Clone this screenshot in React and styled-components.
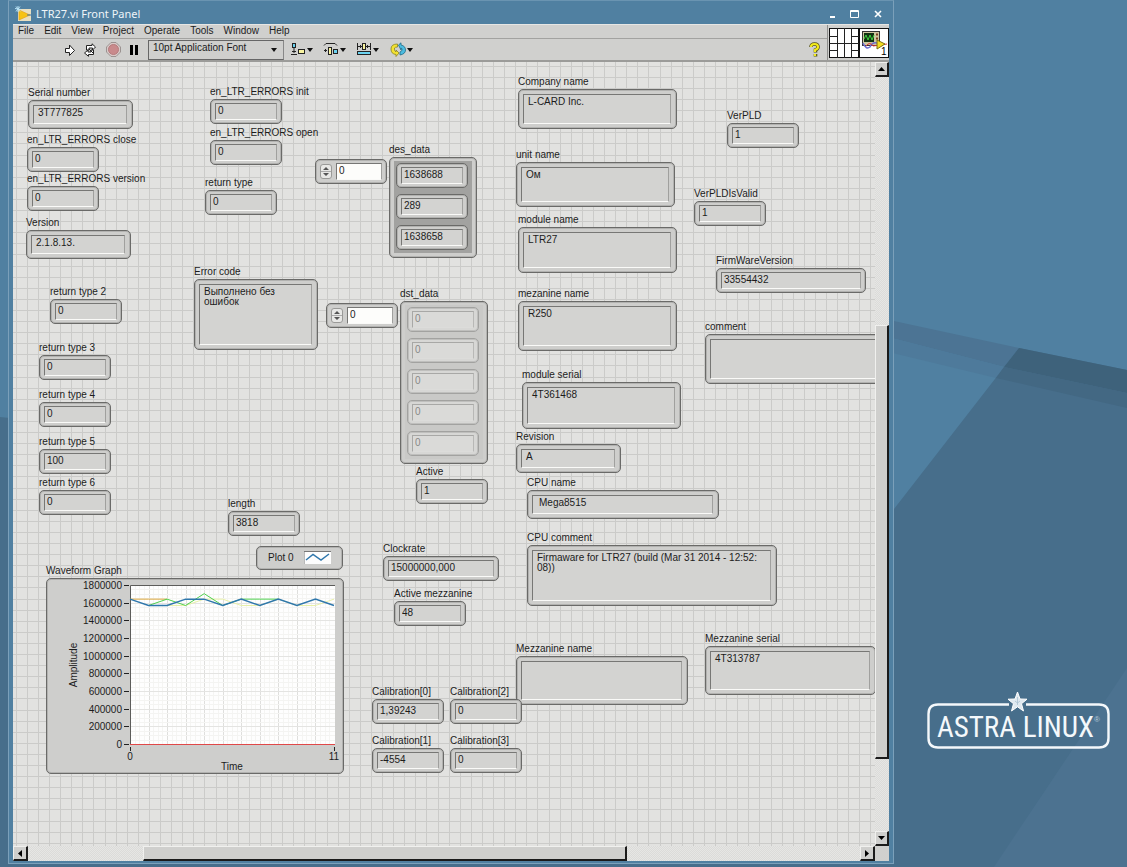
import React from "react";
import styled, { createGlobalStyle, css } from "styled-components";

const GlobalStyle = createGlobalStyle`
  * {
    box-sizing: border-box;
  }
  body {
    margin: 0;
    background: #5080a1;
    font-family: "Liberation Sans", Arial, sans-serif;
    font-size: 10px;
    line-height: 13px;
    color: #1c1c1c;
  }
  button,
  input,
  select,
  textarea {
    font: inherit;
    color: inherit;
    margin: 0;
    border-radius: 0;
    outline: none;
  }
`;

const Desktop = styled.div`
  position: relative;
  display: flex;
  height: 100vh;
  min-height: 600px;
  overflow: hidden;
  padding: 0 0 3px 8px;
`;

const Wallpaper = styled.svg`
  position: absolute;
  inset: 0;
  width: 100%;
  height: 100%;
`;

const Brand = styled.div`
  position: relative;
  flex: 0 0 233px;
  display: flex;
  align-items: flex-end;
  justify-content: center;
  padding: 0 0 113px 14px;
`;

const Window = styled.main`
  position: relative;
  flex: 1;
  min-width: 0;
  display: flex;
  flex-direction: column;
  background: #5080a1;
  border: 1px solid #7ba0ba;
  border-top-color: #6a94b1;
  padding: 0 4px 2px 4px;
`;

const TitleBar = styled.header`
  flex: 0 0 23px;
  display: flex;
  align-items: center;
  gap: 5px;
  padding: 2px 5px 0 2px;
  h1 {
    flex: 1;
    margin: 0;
    font: 400 11px/15px "Noto Sans", sans-serif;
    color: #eef4f8;
  }
`;

const WindowButton = styled.button`
  width: 12px;
  height: 14px;
  margin-left: 6px;
  padding: 0;
  border: 0;
  background: none;
  svg {
    display: block;
  }
`;

const Bars = styled.div`
  flex: 0 0 38px;
  display: flex;
  background: #d0d0ce;
  border-top: 1px solid #e6e6e4;
  border-bottom: 2px solid #9b9b99;
`;

const BarRows = styled.div`
  flex: 1;
  display: flex;
  flex-direction: column;
`;

const MenuBar = styled.nav`
  flex: 0 0 14px;
  display: flex;
  gap: 10px;
  padding-left: 5px;
  line-height: 11px;
  border-bottom: 1px solid #a2a2a0;
  a {
    color: inherit;
    text-decoration: none;
  }
`;

const ToolBar = styled.div`
  flex: 1;
  display: flex;
  align-items: center;
  padding: 0 7px 0 51px;
`;

const ToolButton = styled.button`
  flex: 0 0 auto;
  margin-right: ${(props) => props.$gap || 0}px;
  padding: 0;
  border: 0;
  background: none;
  svg {
    display: block;
  }
`;

const FontPicker = styled.div`
  position: relative;
  width: 136px;
  height: 20px;
  margin-right: 6px;
  select {
    width: 100%;
    height: 100%;
    appearance: none;
    border: 1px solid #666;
    border-right-color: #888;
    background: #cfcfcd;
    padding: 0 0 4px 4px;
  }
  svg {
    position: absolute;
    right: 6px;
    top: 8px;
    pointer-events: none;
  }
`;

const Panes = styled.div`
  display: flex;
  align-items: center;
  padding-left: 1px;
  border-left: 1px solid #8d8d8b;
`;

const Body = styled.div`
  flex: 1;
  min-height: 0;
  display: grid;
  grid-template-columns: minmax(0, 1fr) 14px;
  grid-template-rows: minmax(0, 1fr) 15px;
  background: #d0d0ce;
`;

// ten lines per 111px tile, the grid step is a bit over 11px
const gridStops = [3, 14, 25, 36, 47, 58, 69, 80, 92, 103]
  .map((p) => `transparent ${p}px, #cbcbc9 ${p}px ${p + 1}px, transparent ${p + 1}px`)
  .join(", ");

const Panel = styled.section`
  position: relative;
  overflow: hidden;
  background-color: #e2e2e0;
  background-image: linear-gradient(90deg, ${gridStops}),
    linear-gradient(${gridStops});
  background-size: 111px 111px;
  background-position: 0 1px;
`;

const Track = styled.div`
  display: flex;
  flex-direction: ${(props) => (props.$vertical ? "column" : "row")};
  background: repeating-conic-gradient(#e6e6e4 0 25%, #dbdbd9 0 50%) 0 0 / 2px 2px;
`;

const raised = css`
  background: #cfcfcd;
  border: 1px solid #f0f0ee;
  border-right: 2px solid #1b1b1b;
  border-bottom: 2px solid #1b1b1b;
`;

const ScrollButton = styled.button`
  ${raised}
  flex: 0 0 15px;
  display: flex;
  align-items: center;
  justify-content: center;
  padding: 0;
`;

const Gap = styled.div`
  flex: ${(props) => props.$grow} 1 0;
`;

const Thumb = styled.div`
  ${raised}
  flex: ${(props) => props.$grow} 1 0;
`;

const Item = styled.div`
  position: absolute;
  left: ${(props) => props.$x}px;
  top: ${(props) => props.$y}px;
  width: ${(props) => props.$w}px;
  display: flex;
  flex-direction: column;
  gap: 1px;
  padding-top: 1px;
`;

const Caption = styled.label`
  white-space: nowrap;
`;

const Frame = styled.div`
  height: ${(props) => props.$h || 25}px;
  display: flex;
  align-items: center;
  background: #cececc;
  border: 1px solid #6a6a68;
  border-radius: 5px;
  box-shadow: inset 0 0 0 1px #b2b2b0;
  padding: ${(props) => (props.$text ? "4px 5px 4px 4px" : "3px 4px")};
  ${(props) =>
    props.$dim &&
    css`
      opacity: 0.4;
      background: #eeeeec;
      input {
        background: #f4f4f2;
      }
    `}
`;

const inset = css`
  width: 100%;
  height: 100%;
  min-width: 0;
  background: #d3d3d1;
  border: 1px solid #777775;
  border-right-color: #a0a09e;
  border-bottom-color: #fafaf8;
`;

const NumberBox = styled.input`
  ${inset}
  padding: 0 2px 2px;
  ${(props) => props.$editable && "background: #fdfdfb;"}
`;

const TextBox = styled.textarea`
  ${inset}
  display: block;
  resize: none;
  overflow: hidden;
  line-height: 10px;
  padding: 2px ${(props) => (props.$pad ? 6 : 4)}px 0;
`;

const Spinner = styled.button`
  flex: 0 0 12px;
  height: 15px;
  margin: 0 4px 0 0;
  padding: 0;
  border: 1px solid #9a9a98;
  background: #e8e8e6;
  && {
    border-radius: 3px;
  }
  svg {
    display: block;
  }
`;

const ArrayFrame = styled.div`
  background: #cececc;
  border: 1px solid #6a6a68;
  border-radius: 5px;
  box-shadow: inset 0 0 0 1px #b2b2b0;
  padding: 3px 4px 4px;
`;

const ArrayBody = styled.div`
  display: flex;
  flex-direction: column;
  gap: 6px;
  padding: 2px 4px 3px 2px;
  background: ${(props) => (props.$dim ? "#c9c9c7" : "#a2a2a0")};
`;

const Legend = styled.div`
  display: flex;
  align-items: center;
  justify-content: space-between;
  height: 24px;
  padding: 0 11px 2px;
  background: #cececc;
  border: 1px solid #6a6a68;
  border-radius: 5px;
  box-shadow: inset 0 0 0 1px #b2b2b0;
`;

const GraphFrame = styled.div`
  height: 196px;
  background: #cececc;
  border: 1px solid #6a6a68;
  border-radius: 5px;
  box-shadow: inset 0 0 0 1px #b2b2b0;
  svg {
    display: block;
  }
`;

// x and y are in panel pixels, y is the top of the caption
const indicators = [
  { label: "Serial number", x: 15, y: 23, w: 105, h: 29, value: "3T777825", text: true },
  { label: "en_LTR_ERRORS close", x: 14, y: 70, w: 72, value: "0" },
  { label: "en_LTR_ERRORS version", x: 14, y: 109, w: 72, value: "0" },
  { label: "Version", x: 13, y: 153, w: 105, h: 29, value: "2.1.8.13.", text: true },
  { label: "en_LTR_ERRORS init", x: 197, y: 22, w: 72, value: "0" },
  { label: "en_LTR_ERRORS open", x: 197, y: 63, w: 72, value: "0" },
  { label: "return type", x: 192, y: 113, w: 72, value: "0" },
  { label: "Error code", x: 181, y: 202, w: 124, h: 71, value: "Выполнено без\nошибок", text: true },
  { label: "return type 2", x: 37, y: 222, w: 72, value: "0" },
  { label: "return type 3", x: 26, y: 278, w: 72, value: "0" },
  { label: "return type 4", x: 26, y: 325, w: 72, value: "0" },
  { label: "return type 5", x: 26, y: 372, w: 72, value: "100" },
  { label: "return type 6", x: 26, y: 413, w: 72, value: "0" },
  { label: "length", x: 215, y: 434, w: 72, value: "3818" },
  { label: "Active", x: 403, y: 402, w: 72, value: "1" },
  { label: "Clockrate", x: 370, y: 479, w: 116, value: "15000000,000" },
  { label: "Active mezzanine", x: 381, y: 524, w: 72, value: "48" },
  { label: "Company name", x: 505, y: 12, w: 159, h: 40, value: "L-CARD Inc.", text: true },
  { label: "unit name", x: 503, y: 85, w: 159, h: 45, value: "Ом", text: true },
  { label: "module name", x: 505, y: 150, w: 159, h: 46, value: "LTR27", text: true },
  { label: "mezanine name", x: 505, y: 224, w: 159, h: 50, value: "R250", text: true },
  { label: "module serial", x: 509, y: 305, w: 159, h: 47, value: "4T361468", text: true },
  { label: "Revision", x: 503, y: 367, w: 105, h: 29, value: "A", text: true },
  { label: "CPU name", x: 514, y: 413, w: 192, h: 29, value: "Mega8515", text: true, pad: true },
  { label: "CPU comment", x: 514, y: 468, w: 250, h: 61, value: "Firmaware for LTR27 (build (Mar 31 2014 - 12:52:\n08))", text: true },
  { label: "Mezzanine name", x: 503, y: 579, w: 172, h: 49, value: "", text: true },
  { label: "VerPLD", x: 714, y: 46, w: 72, value: "1" },
  { label: "VerPLDIsValid", x: 681, y: 124, w: 72, value: "1" },
  { label: "FirmWareVersion", x: 703, y: 191, w: 150, value: "33554432" },
  { label: "comment", x: 692, y: 257, w: 220, h: 50, value: "", text: true },
  { label: "Mezzanine serial", x: 692, y: 569, w: 171, h: 49, value: "4T313787", text: true },
  { label: "Calibration[0]", x: 359, y: 622, w: 72, value: "1,39243" },
  { label: "Calibration[2]", x: 437, y: 622, w: 72, value: "0" },
  { label: "Calibration[1]", x: 359, y: 671, w: 72, value: "-4554" },
  { label: "Calibration[3]", x: 437, y: 671, w: 72, value: "0" },
];

const Indicator = ({ label, x, y, w, h, value, text, pad }) => (
  <Item $x={x} $y={y} $w={w}>
    <Caption htmlFor={label}>{label}</Caption>
    <Frame $h={h} $text={text}>
      {text ? (
        <TextBox id={label} readOnly value={value} $pad={pad} />
      ) : (
        <NumberBox id={label} readOnly value={value} />
      )}
    </Frame>
  </Item>
);

const IndexControl = ({ name, x, y }) => (
  <Item $x={x} $y={y} $w={72}>
    <Frame>
      <Spinner type="button" aria-label={`${name} step`}>
        <svg width="10" height="13" viewBox="0 0 10 13">
          <path d="M5 2 L8 5 H2 Z M5 11 L8 8 H2 Z" fill="#555" />
          <path d="M0 6.5 H10" stroke="#aaa" />
        </svg>
      </Spinner>
      <NumberBox $editable defaultValue="0" aria-label={name} />
    </Frame>
  </Item>
);

const ArrayIndicator = ({ label, x, y, values, dim }) => (
  <Item $x={x} $y={y} $w={88} role="group" aria-label={label}>
    <Caption as="span">{label}</Caption>
    <ArrayFrame>
      <ArrayBody $dim={dim}>
        {values.map((value, i) => (
          <Frame key={i} $dim={dim}>
            <NumberBox readOnly value={value} aria-label={`${label} ${i}`} />
          </Frame>
        ))}
      </ArrayBody>
    </ArrayFrame>
  </Item>
);

const ticks = [1800000, 1600000, 1400000, 1200000, 1000000, 800000, 600000, 400000, 200000, 0];
const HIGH = 1640000;
const LOW = 1568000;
const plots = [
  { color: "#e8f0a8", from: 2, data: [LOW, LOW, HIGH, HIGH, LOW, LOW, HIGH, LOW, LOW, HIGH] },
  { color: "#d9a53a", from: 0, data: [HIGH, HIGH, HIGH] },
  { color: "#4fd04f", from: 1, data: [LOW, HIGH, LOW, 1702000, LOW, HIGH, HIGH, HIGH] },
  { color: "#2f77ac", from: 0, width: 1.5, data: [HIGH, LOW, LOW, HIGH, HIGH, LOW, HIGH, LOW, HIGH, LOW, HIGH, LOW] },
];
const px = (i) => 83 + (i * 204) / 11;
const py = (v) => 165 - (v * 159) / 1800000;

const WaveformGraph = () => (
  <svg width="295" height="194" viewBox="0 0 295 194" fontSize="10" fill="#1c1c1c">
    <rect x="83" y="6" width="205" height="160" fill="#fefefe" />
    {Array.from({ length: 44 }, (_, i) => (
      <path key={i} d={`M${Math.round(px(i / 4)) + 0.5} 6 V165`} stroke={i % 4 ? "#f5f5f3" : "#dfdfdd"} />
    ))}
    {Array.from({ length: 36 }, (_, i) => (
      <path key={i} d={`M83 ${Math.round(py(i * 50000)) + 0.5} H288`} stroke={i % 4 ? "#f4f4f2" : "#e4e4e2"} />
    ))}
    <path d="M83.5 166 V6.5 H288" fill="none" stroke="#5c5c5a" />
    {ticks.map((v) => (
      <g key={v}>
        <path d={`M77 ${Math.round(py(v)) + 0.5} H82`} stroke="#222" />
        <text x="75" y={Math.round(py(v)) + 4} textAnchor="end">
          {v}
        </text>
      </g>
    ))}
    {plots.map((p) => (
      <polyline
        key={p.color}
        points={p.data.map((v, i) => `${px(i + p.from)},${py(v)}`).join(" ")}
        fill="none"
        stroke={p.color}
        strokeWidth={p.width || 1}
      />
    ))}
    <path d="M83 165.5 H288" stroke="#e04848" />
    <path d="M83.5 168 V172 M287.5 168 V172" stroke="#222" />
    <text x="83" y="181" textAnchor="middle">0</text>
    <text x="287" y="181" textAnchor="middle">11</text>
    <text x="185" y="191" textAnchor="middle">Time</text>
    <text transform="translate(30 86) rotate(-90)" textAnchor="middle">Amplitude</text>
  </svg>
);

const Caret = () => <path d="M17 6 H23 L20 10 Z" fill="#111" />;

const AstraLogo = () => (
  <svg width="186" height="60" viewBox="0 0 186 60" role="img" aria-label="Astra Linux">
    <path
      d="M84 13.5 H13 Q3.5 13.5 3.5 23 V47 Q3.5 56.5 13 56.5 H174 Q183.5 56.5 183.5 47 V23 Q183.5 13.5 174 13.5 H101"
      fill="none"
      stroke="#f4f8fb"
      strokeWidth="2.4"
    />
    <path
      d="M92.5 1 L95 8 L102 8.2 L96.5 12.7 L98.5 20 L92.5 15.8 L86.5 20 L88.5 12.7 L83 8.2 L90 8 Z"
      fill="#dfe9f0"
      stroke="#fff"
    />
    <path d="M92.5 6 V14 M90 10 L92.5 12 L95 10" stroke="#a9c0d0" strokeWidth=".8" fill="none" />
    <text x="12" y="46" fontFamily="'Liberation Sans Narrow', 'Roboto Condensed', Roboto, sans-serif" fontSize="29" fontWeight="400" fill="#f4f8fb">
      ASTRA LINUX
    </text>
    <text x="169" y="31" fontSize="8" fill="#b9cddb">®</text>
  </svg>
);

const App = () => {
  return (
    <>
      <GlobalStyle />
      <Desktop>
        <Wallpaper viewBox="0 0 1127 867" preserveAspectRatio="none">
          <rect width="1127" height="867" fill="#5080a1" />
          <path d="M880 318 L1019 348 L1004 367 L880 335 Z" fill="#4c7494" />
          <path d="M880 335 L1004 367 L996 378 L880 350 Z" fill="#4e7a9b" />
          <path d="M1019 348 L1127 370 V867 H0 V417 L894 509 Z" fill="#476e8b" />
          <path d="M1019 348 L1127 370 V393 L1004 367 Z" fill="#3e627b" />
          <path d="M1004 367 L1127 393 V408 L996 378 Z" fill="#436883" />
          <path d="M1127 668 V867 H994 Z" fill="#4c7290" />
        </Wallpaper>
        <Window>
          <TitleBar>
            <svg width="16" height="16" viewBox="0 0 16 16">
              <rect x="3" y="3" width="13" height="12" fill="#e9dfc0" />
              <path d="M4 4 L15 9 L4 14 Z" fill="#f7c313" stroke="#e09b12" strokeWidth=".6" />
              <path d="M12 9 H16" stroke="#3c72b0" />
              <path d="M3 0 V6 M0 2.5 L6 3.5 M1 5.5 L5 .5 M1 .5 L5 5.5" stroke="#b9e3f5" />
            </svg>
            <h1>LTR27.vi Front Panel</h1>
            <WindowButton aria-label="Minimize">
              <svg width="12" height="14"><path d="M4 10 H9" stroke="#fff" strokeWidth="2" /></svg>
            </WindowButton>
            <WindowButton aria-label="Maximize">
              <svg width="12" height="14">
                <path d="M1.5 3.5 H9.5 V10.5 H1.5 Z M1 4.5 H10" fill="none" stroke="#fff" />
              </svg>
            </WindowButton>
            <WindowButton aria-label="Close">
              <svg width="12" height="14"><path d="M3 4 L9 10 M9 4 L3 10" stroke="#fff" strokeWidth="1.6" /></svg>
            </WindowButton>
          </TitleBar>
          <Bars>
            <BarRows>
              <MenuBar>
                {["File", "Edit", "View", "Project", "Operate", "Tools", "Window", "Help"].map((m) => (
                  <a key={m} href={`#${m}`}>{m}</a>
                ))}
              </MenuBar>
              <ToolBar>
                <ToolButton aria-label="Run" $gap={7}>
                  <svg width="12" height="14">
                    <path d="M1.5 5.5 H5.5 V2 L10.5 7.5 L5.5 12.5 V9.5 H1.5 Z" fill="#fff" stroke="#222" />
                  </svg>
                </ToolButton>
                <ToolButton aria-label="Run continuously" $gap={9}>
                  <svg width="14" height="14" fill="#fff" stroke="#222">
                    <path d="M3.5 7 V2.5 H9 V.8 L12.5 4 L9.5 7 V5 H6 V7 Z" />
                    <path d="M10.5 7 V11.5 H5.5 V13.3 L1.5 10 L5 7 V9 H8 V7 Z" />
                    <path d="M6 6 L10 10" />
                  </svg>
                </ToolButton>
                <ToolButton aria-label="Abort" $gap={8}>
                  <svg width="15" height="15">
                    <path d="M5 .5 H10 L14.5 5 V10 L10 14.5 H5 L.5 10 V5 Z" fill="#d9c9c8" stroke="#9b9391" />
                    <circle cx="7.5" cy="7.5" r="5" fill="#c98a8c" stroke="#b57a7c" />
                  </svg>
                </ToolButton>
                <ToolButton aria-label="Pause" $gap={9}>
                  <svg width="10" height="12"><path d="M2.5 1 V11 M7.5 1 V11" stroke="#000" strokeWidth="3" /></svg>
                </ToolButton>
                <FontPicker>
                  <select aria-label="Font" defaultValue="app">
                    <option value="app">10pt Application Font</option>
                  </select>
                  <svg width="8" height="5"><path d="M1 0 H7 L4 4 Z" fill="#111" /></svg>
                </FontPicker>
                <ToolButton aria-label="Align objects" $gap={9}>
                  <svg width="24" height="16">
                    <rect x="2.5" y="1.5" width="3" height="4" fill="#6bd3f0" stroke="#222" />
                    <rect x="8.5" y="7.5" width="6" height="4" fill="#f8f3a0" stroke="#222" />
                    <path d="M1 12.5 H7 M4 6 V11 M2 9.5 H6" stroke="#222" />
                    <Caret />
                  </svg>
                </ToolButton>
                <ToolButton aria-label="Distribute objects" $gap={9}>
                  <svg width="24" height="16">
                    <rect x="5.5" y="5.5" width="3" height="7" fill="#f8f3a0" stroke="#222" />
                    <rect x="10.5" y="7.5" width="4" height="4" fill="#6bd3f0" stroke="#222" />
                    <path d="M1 3.5 L3 1.5 H12 L14 3.5 M1 8.5 H4 M2.5 7 V10" stroke="#222" fill="none" />
                    <Caret />
                  </svg>
                </ToolButton>
                <ToolButton aria-label="Resize objects" $gap={10}>
                  <svg width="24" height="16">
                    <rect x="1.5" y="9.5" width="13" height="3" fill="#6bd3f0" stroke="#222" />
                    <rect x="6.5" y="1.5" width="3" height="6" fill="#f8f3a0" stroke="#222" />
                    <path d="M1.500 1 V8 M14.500 1 V8 M2 4.500 H6 M10 4.500 H14 M4.500 3 V6 M11.500 3 V6" stroke="#222" />
                    <Caret />
                  </svg>
                </ToolButton>
                <ToolButton aria-label="Reorder">
                  <svg width="24" height="16">
                    <path d="M7.5 2 Q1 2 1 7 Q1 12 6 12.5 V14.5 L9 11 L6 8 V10 Q4 9 4.5 6 Q5 5 7.5 5 Z" fill="#f3e231" stroke="#8a8420" strokeWidth=".8" />
                    <path d="M8.5 3 L11 .8 V3 Q15.5 4 15.5 8 Q15.5 12 10 13 V10 Q12.5 9 12 7 Q11.5 6 11 6 V8 Z" fill="#4cbce0" stroke="#1e6b88" strokeWidth=".8" />
                    <Caret />
                  </svg>
                </ToolButton>
                <Gap $grow={1} />
                <ToolButton aria-label="Context help">
                  <svg width="11" height="16">
                    <path d="M2 5 Q2 2 5.5 2 Q9 2 9 5 Q9 7 6.5 8 V10.5 M6.5 12 V14.5" fill="none" stroke="#55521a" strokeWidth="3.6" />
                    <path d="M2 5 Q2 2 5.5 2 Q9 2 9 5 Q9 7 6 8 V10 M6 12 V14" fill="none" stroke="#f2ea1c" strokeWidth="2.2" />
                  </svg>
                </ToolButton>
              </ToolBar>
            </BarRows>
            <Panes>
              <svg width="30" height="30">
                <rect x=".5" y=".5" width="29" height="29" fill="#fff" stroke="#111" />
                <path d="M8.5 0 V30 M15.5 0 V30 M22.5 0 V30 M0 15.5 H30 M0 8.5 H8 M0 22.5 H8 M23 8.5 H30 M23 22.5 H30" stroke="#222" />
              </svg>
              <svg width="30" height="30">
                <rect x=".5" y=".5" width="29" height="29" fill="#fff" stroke="#111" />
                <rect x="3.5" y="3.5" width="17" height="14" fill="#cfc7a0" stroke="#333" />
                <rect x="5" y="5" width="10" height="9" fill="#123312" />
                <path d="M5 11 L7 7 L9 12 L11 7 L13 12 L15 7" fill="none" stroke="#3ed23e" />
                <path d="M17 6.5 H19 M17 10.5 H19" stroke="#7a3f20" strokeWidth="2" />
                <path d="M4 15 Q7 22 11 19 Q13 14 18 15" fill="none" stroke="#6d6dd0" strokeWidth="1.5" />
                <path d="M7 18 Q11 13 14 18 L28 16" fill="none" stroke="#d33" />
                <path d="M18 12 L26 16 L18 21 Z" fill="#f3dd22" stroke="#7d6f10" />
                <text x="22" y="27" fontSize="10">1</text>
              </svg>
            </Panes>
          </Bars>
          <Body>
            <Panel>
              {indicators.map((item) => (
                <Indicator key={item.label} {...item} />
              ))}
              <IndexControl name="des_data index" x={302} y={96} />
              <IndexControl name="dst_data index" x={313} y={240} />
              <ArrayIndicator label="des_data" x={376} y={80} values={["1638688", "289", "1638658"]} />
              <ArrayIndicator label="dst_data" x={387} y={224} values={["0", "0", "0", "0", "0"]} dim />
              <Item $x={243} $y={483} $w={87}>
                <Legend>
                  <span>Plot 0</span>
                  <svg width="27" height="13">
                    <rect width="27" height="13" fill="#fdfdfd" />
                    <path d="M0 13 V.5 H27" fill="none" stroke="#777" />
                    <path d="M2 9 L9 3.5 L17 9 L25 3" fill="none" stroke="#2f77ac" strokeWidth="1.5" />
                  </svg>
                </Legend>
              </Item>
              <Item $x={33} $y={501} $w={298}>
                <Caption as="span">Waveform Graph</Caption>
                <GraphFrame>
                  <WaveformGraph />
                </GraphFrame>
              </Item>
            </Panel>
            <Track $vertical>
              <ScrollButton aria-label="Scroll up">
                <svg width="7" height="4"><path d="M0 4 L3.5 0 L7 4 Z" /></svg>
              </ScrollButton>
              <Gap $grow={249} />
              <Thumb $grow={433} />
              <Gap $grow={72} />
              <ScrollButton aria-label="Scroll down">
                <svg width="7" height="4"><path d="M0 0 L3.5 4 L7 0 Z" /></svg>
              </ScrollButton>
            </Track>
            <Track>
              <ScrollButton aria-label="Scroll left">
                <svg width="4" height="7"><path d="M4 0 L0 3.5 L4 7 Z" /></svg>
              </ScrollButton>
              <Gap $grow={115} />
              <Thumb $grow={482} />
              <Gap $grow={233} />
              <ScrollButton aria-label="Scroll right">
                <svg width="4" height="7"><path d="M0 0 L4 3.5 L0 7 Z" /></svg>
              </ScrollButton>
            </Track>
          </Body>
        </Window>
        <Brand>
          <AstraLogo />
        </Brand>
      </Desktop>
    </>
  );
};

export default App;
